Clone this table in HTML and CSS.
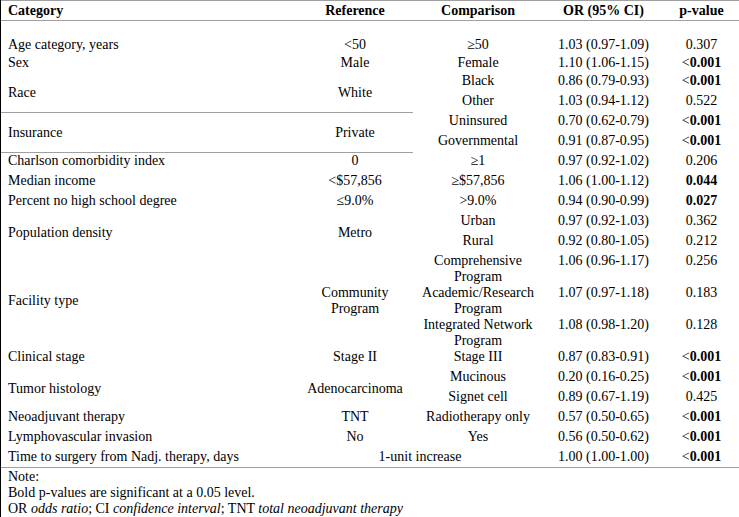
FILE: index.html
```html
<!DOCTYPE html>
<html lang="en">
<head>
<meta charset="utf-8">
<title>Odds ratios</title>
<link rel="stylesheet" href="styles.css">
</head>
<body>
<div class="page">
  <div class="table">
    <div class="cell head l">Category</div>
    <div class="cell head c">Reference</div>
    <div class="cell head c">Comparison</div>
    <div class="cell head c">OR (95% CI)</div>
    <div class="cell head c">p-value</div>

    <div class="spacer"></div>

    <div class="cell l">Age category, years</div>
    <div class="cell c">&lt;50</div>
    <div class="cell c">≥50</div>
    <div class="cell c">1.03 (0.97-1.09)</div>
    <div class="cell c">0.307</div>

    <div class="cell l">Sex</div>
    <div class="cell c">Male</div>
    <div class="cell c">Female</div>
    <div class="cell c">1.10 (1.06-1.15)</div>
    <div class="cell c">&lt;<b>0.001</b></div>

    <div class="cell l group sep">Race</div>
    <div class="cell c group sep">White</div>
    <div class="cell c">Black</div>
    <div class="cell c">0.86 (0.79-0.93)</div>
    <div class="cell c">&lt;<b>0.001</b></div>
    <div class="cell c">Other</div>
    <div class="cell c">1.03 (0.94-1.12)</div>
    <div class="cell c">0.522</div>

    <div class="cell l group sep">Insurance</div>
    <div class="cell c group sep">Private</div>
    <div class="cell c">Uninsured</div>
    <div class="cell c">0.70 (0.62-0.79)</div>
    <div class="cell c">&lt;<b>0.001</b></div>
    <div class="cell c">Governmental</div>
    <div class="cell c">0.91 (0.87-0.95)</div>
    <div class="cell c">&lt;<b>0.001</b></div>

    <div class="cell l">Charlson comorbidity index</div>
    <div class="cell c">0</div>
    <div class="cell c">≥1</div>
    <div class="cell c">0.97 (0.92-1.02)</div>
    <div class="cell c">0.206</div>

    <div class="cell l">Median income</div>
    <div class="cell c">&lt;$57,856</div>
    <div class="cell c">≥$57,856</div>
    <div class="cell c">1.06 (1.00-1.12)</div>
    <div class="cell c"><b>0.044</b></div>

    <div class="cell l">Percent no high school degree</div>
    <div class="cell c">≤9.0%</div>
    <div class="cell c">&gt;9.0%</div>
    <div class="cell c">0.94 (0.90-0.99)</div>
    <div class="cell c"><b>0.027</b></div>

    <div class="cell l group">Population density</div>
    <div class="cell c group">Metro</div>
    <div class="cell c">Urban</div>
    <div class="cell c">0.97 (0.92-1.03)</div>
    <div class="cell c">0.362</div>
    <div class="cell c">Rural</div>
    <div class="cell c">0.92 (0.80-1.05)</div>
    <div class="cell c">0.212</div>

    <div class="cell l group3">Facility type</div>
    <div class="cell c group3">Community Program</div>
    <div class="cell c">Comprehensive Program</div>
    <div class="cell c">1.06 (0.96-1.17)</div>
    <div class="cell c">0.256</div>
    <div class="cell c">Academic/Research Program</div>
    <div class="cell c">1.07 (0.97-1.18)</div>
    <div class="cell c">0.183</div>
    <div class="cell c">Integrated Network Program</div>
    <div class="cell c">1.08 (0.98-1.20)</div>
    <div class="cell c">0.128</div>

    <div class="cell l">Clinical stage</div>
    <div class="cell c">Stage II</div>
    <div class="cell c">Stage III</div>
    <div class="cell c">0.87 (0.83-0.91)</div>
    <div class="cell c">&lt;<b>0.001</b></div>

    <div class="cell l group">Tumor histology</div>
    <div class="cell c group">Adenocarcinoma</div>
    <div class="cell c">Mucinous</div>
    <div class="cell c">0.20 (0.16-0.25)</div>
    <div class="cell c">&lt;<b>0.001</b></div>
    <div class="cell c">Signet cell</div>
    <div class="cell c">0.89 (0.67-1.19)</div>
    <div class="cell c">0.425</div>

    <div class="cell l">Neoadjuvant therapy</div>
    <div class="cell c">TNT</div>
    <div class="cell c">Radiotherapy only</div>
    <div class="cell c">0.57 (0.50-0.65)</div>
    <div class="cell c">&lt;<b>0.001</b></div>

    <div class="cell l">Lymphovascular invasion</div>
    <div class="cell c">No</div>
    <div class="cell c">Yes</div>
    <div class="cell c">0.56 (0.50-0.62)</div>
    <div class="cell c">&lt;<b>0.001</b></div>

    <div class="cell l last">Time to surgery from Nadj. therapy, days</div>
    <div class="cell c last wide">1-unit increase</div>
    <div class="cell c last">1.00 (1.00-1.00)</div>
    <div class="cell c last">&lt;<b>0.001</b></div>
  </div>
  <div class="notes">
    <p>Note:</p>
    <p>Bold p-values are significant at a 0.05 level.</p>
    <p>OR <i>odds ratio</i>; CI <i>confidence interval</i>; TNT <i>total neoadjuvant therapy</i></p>
  </div>
</div>
</body>
</html>
```

FILE: styles.css
```css
html, body {
  margin: 0;
  padding: 0;
  background: #fff;
}

body {
  font-family: "Liberation Serif", "Times New Roman", serif;
  font-size: 14px;
  color: #000;
}

.page {
  border-left: 1px solid #000;
  min-height: 100vh;
  box-sizing: border-box;
}

.table {
  display: grid;
  grid-template-columns: 296px 116px 130px 121px 75px;
  grid-template-rows: 20px 13px 18px 18px repeat(9, 20px) repeat(3, 32px) repeat(5, 20px) 22px;
  border-top: 1px solid #a0a0a0;
}

.cell {
  display: flex;
  align-items: flex-start;
  padding: 3px 4px 0;
  line-height: 16px;
  box-sizing: border-box;
}

.l {
  justify-content: flex-start;
  padding-left: 7px;
  text-align: left;
}

.c {
  justify-content: center;
  text-align: center;
}

.head {
  font-weight: bold;
  align-items: center;
  padding-top: 0;
  border-bottom: 1px solid #a0a0a0;
}

.spacer {
  grid-column: 1 / -1;
}

.group {
  grid-row: span 2;
  align-items: center;
  padding-top: 6px;
}

.group3 {
  grid-row: span 3;
  align-items: center;
  padding-top: 6px;
}

.sep {
  margin-bottom: -3px;
  padding-top: 3px;
  border-bottom: 1px solid #a0a0a0;
}

.wide {
  grid-column: span 2;
}

.last {
  border-bottom: 1px solid #a0a0a0;
}

.notes {
  padding: 1px 0 0 7px;
}

.notes p {
  margin: 0;
  line-height: 16px;
}
```
